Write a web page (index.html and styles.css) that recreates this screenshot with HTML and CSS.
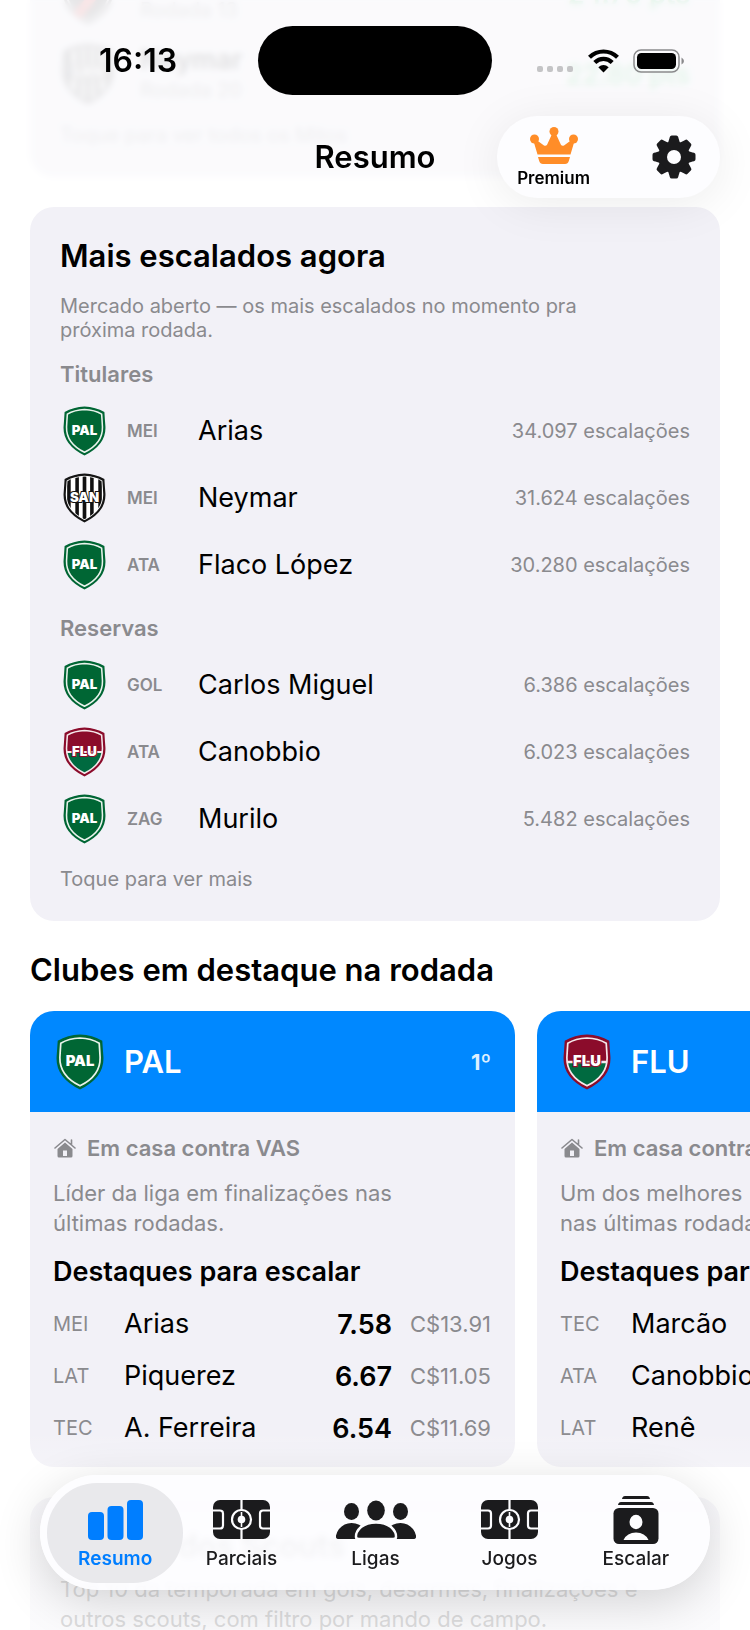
FILE: index.html
```html
<!DOCTYPE html>
<html lang="pt-BR">
<head>
<meta charset="utf-8">
<meta name="viewport" content="width=device-width, initial-scale=1">
<title>Resumo</title>
<link rel="stylesheet" href="styles.css">
</head>
<body>
<svg class="defs" aria-hidden="true">
  <defs>
    <path id="shield" d="M21 .5Q32 1 40.500 6Q41 14 41.500 20Q42.500 38 21 48.500Q-.5 38 .5 20Q1 14 1.500 6Q10 1 21 .5Z"/>
    <path id="shield-in" d="M21 3.500Q31 4 37.800 8Q38.300 15 38.600 20.500Q39 36.500 21 45.300Q3 36.500 3.400 20.500Q3.700 15 4.200 8Q11 4 21 3.500Z"/>
    <clipPath id="shield-clip"><use href="#shield-in"/></clipPath>
    <symbol id="pal" viewBox="0 0 42 49">
      <use href="#shield" fill="#006634"/>
      <use href="#shield-in" fill="#006634" stroke="#e9f3ec" stroke-width="1.500"/>
      <text class="crest" x="21" y="28" fill="#fff">PAL</text>
    </symbol>
    <symbol id="san" viewBox="0 0 42 49">
      <use href="#shield" fill="#151515"/>
      <use href="#shield-in" fill="#fff" stroke="#fff" stroke-width="1.500"/>
      <g clip-path="url(#shield-clip)" fill="#111"><path d="M4 4h3.500v42H4zM12 3h3.500v44H12zM19.200 3h3.600v44h-3.600zM26.500 3H30v44h-3.500zM34.500 4H38v42h-3.500z"/></g>
      <text class="crest crest-outline" x="21" y="28" fill="#fff">SAN</text>
    </symbol>
    <symbol id="flu" viewBox="0 0 42 49">
      <use href="#shield" fill="#8b0c2b"/>
      <use href="#shield-in" fill="#8b0c2b"/>
      <g clip-path="url(#shield-clip)"><path d="M0 25h42v24H0z" fill="#006a40"/><path d="M0 23.500h42v2H0z" fill="#f5e9ec"/></g>
      <use href="#shield-in" fill="none" stroke="#f5e9ec" stroke-width="1.500"/>
      <text class="crest crest-outline crest-flu" x="21" y="28" fill="#fff">FLU</text>
    </symbol>
    <symbol id="sao" viewBox="0 0 42 49">
      <use href="#shield" fill="#222"/>
      <use href="#shield-in" fill="#333" stroke="#fff" stroke-width="1.500"/>
      <path d="M36 14L12 42" stroke="#e33" stroke-width="7"/>
    </symbol>
    <symbol id="house" viewBox="0 0 22 20">
      <path d="M1 10L11 1.500L21 10M17.500 2v5" fill="none" stroke="currentColor" stroke-width="1.600" stroke-linecap="round" stroke-linejoin="round"/>
      <path fill-rule="evenodd" d="M11 4.500L18.500 11V18q0 1.500-1.500 1.500H5Q3.500 19.500 3.500 18V11ZM9 12.500V18h4V12.500Z" fill="currentColor"/>
    </symbol>
    <symbol id="pitch" viewBox="0 0 57 39">
      <rect width="57" height="39" rx="7" fill="currentColor"/>
      <g fill="none" stroke="#fdfdff" stroke-width="2.200">
        <path d="M28.500 0V11M28.500 28V39M0 10.500H7q3 0 3 3v12q0 3-3 3H0M57 10.500H50q-3 0-3 3v12q0 3 3 3h7"/>
        <circle cx="28.500" cy="19.500" r="9.500"/>
      </g>
      <path d="M28.500 12v15" stroke="#fdfdff" stroke-width="1.600"/>
      <circle cx="28.500" cy="19.500" r="3.800" fill="#fdfdff"/>
    </symbol>
  </defs>
</svg>

<div class="screen">
  <main class="content">
    <section class="card previous">
      <div class="past-row"><svg class="past-crest"><use href="#sao"/></svg><div class="past-info"><span class="past-name">Calleri</span><span>Rodada 13</span></div><span class="points">24.70 pts</span></div>
      <div class="past-row"><svg class="past-crest"><use href="#san"/></svg><div class="past-info"><span class="past-name">Neymar</span><span>Rodada 20</span></div><span class="points">22.80 pts</span></div>
      <p class="small">Toque para ver todos os Mitos</p>
    </section>

    <section class="card picks">
      <h2 class="title">Mais escalados agora</h2>
      <p class="small intro">Mercado aberto — os mais escalados no momento pra próxima rodada.</p>
      <h3 class="group">Titulares</h3>
      <ul class="players">
        <li><svg class="badge"><use href="#pal"/></svg><span class="pos">MEI</span><span class="name">Arias</span><span class="small">34.097 escalações</span></li>
        <li><svg class="badge"><use href="#san"/></svg><span class="pos">MEI</span><span class="name">Neymar</span><span class="small">31.624 escalações</span></li>
        <li><svg class="badge"><use href="#pal"/></svg><span class="pos">ATA</span><span class="name">Flaco López</span><span class="small">30.280 escalações</span></li>
      </ul>
      <h3 class="group">Reservas</h3>
      <ul class="players">
        <li><svg class="badge"><use href="#pal"/></svg><span class="pos">GOL</span><span class="name">Carlos Miguel</span><span class="small">6.386 escalações</span></li>
        <li><svg class="badge"><use href="#flu"/></svg><span class="pos">ATA</span><span class="name">Canobbio</span><span class="small">6.023 escalações</span></li>
        <li><svg class="badge"><use href="#pal"/></svg><span class="pos">ZAG</span><span class="name">Murilo</span><span class="small">5.482 escalações</span></li>
      </ul>
      <p class="small more">Toque para ver mais</p>
    </section>

    <h2 class="title section-title">Clubes em destaque na rodada</h2>
    <div class="carousel">
      <article class="club">
        <header class="club-head"><svg class="club-badge"><use href="#pal"/></svg><h3 class="club-name">PAL</h3><span class="rank">1º</span></header>
        <div class="club-body">
          <p class="venue"><svg class="house"><use href="#house"/></svg>Em casa contra VAS</p>
          <p class="body-text">Líder da liga em finalizações nas últimas rodadas.</p>
          <h4 class="subtitle">Destaques para escalar</h4>
          <ul class="scores">
            <li><span class="role">MEI</span><span class="name">Arias</span><b>7.58</b><span class="price">C$13.91</span></li>
            <li><span class="role">LAT</span><span class="name">Piquerez</span><b>6.67</b><span class="price">C$11.05</span></li>
            <li><span class="role">TEC</span><span class="name">A. Ferreira</span><b>6.54</b><span class="price">C$11.69</span></li>
          </ul>
        </div>
      </article>
      <article class="club">
        <header class="club-head"><svg class="club-badge"><use href="#flu"/></svg><h3 class="club-name">FLU</h3><span class="rank">2º</span></header>
        <div class="club-body">
          <p class="venue"><svg class="house"><use href="#house"/></svg>Em casa contra BAH</p>
          <p class="body-text">Um dos melhores<br>nas últimas rodadas.</p>
          <h4 class="subtitle">Destaques para escalar</h4>
          <ul class="scores">
            <li><span class="role">TEC</span><span class="name">Marcão</span></li>
            <li><span class="role">ATA</span><span class="name">Canobbio</span></li>
            <li><span class="role">LAT</span><span class="name">Renê</span></li>
          </ul>
        </div>
      </article>
    </div>

    <section class="card leaders">
      <h2 class="title">Líderes dos Scouts</h2>
      <p class="body-text">Top 10 da temporada em gols, desarmes, finalizações e outros scouts, com filtro por mando de campo.</p>
    </section>
  </main>

  <header class="topbar">
    <div class="status">
      <span class="clock">16:13</span>
      <span class="island"></span>
      <span class="signals">
        <svg width="37" height="24" viewBox="0 0 37 24"><g fill="#c4c4c6"><rect x="0" y="17" width="6" height="6" rx="2"/><rect x="10" y="17" width="6" height="6" rx="2"/><rect x="20" y="17" width="6" height="6" rx="2"/><rect x="30" y="17" width="6" height="6" rx="2"/></g></svg>
        <svg width="31" height="24" viewBox="0 0 31 24"><g fill="none" stroke="#000" stroke-width="4.200"><path d="M1.500 8.300Q7.500 2.500 15.500 2.500T29.500 8.300"/><path d="M6.800 13.500Q10.500 9.800 15.500 9.800T24.200 13.500"/></g><path d="M10.300 18.200Q15.500 13.600 20.700 18.200L15.500 23.500Z"/></svg>
        <svg width="52" height="24" viewBox="0 0 52 24"><rect x="1" y="1" width="45" height="22" rx="7" fill="none" stroke="#8a8a8c" stroke-width="1.500"/><rect x="4" y="4" width="39" height="16" rx="4.500"/><path d="M48.500 8.500Q51 10 51 12T48.500 15.500Z" fill="#8a8a8c"/></svg>
      </span>
    </div>
    <div class="navbar">
      <h1 class="page-title">Resumo</h1>
      <div class="actions">
        <button class="premium" type="button">
          <svg width="48" height="37" viewBox="0 0 48 37" fill="#ff8d28"><circle cx="24" cy="4.500" r="4.500"/><circle cx="4.500" cy="12" r="4.500"/><circle cx="43.500" cy="12" r="4.500"/><path d="M3.500 14L6.500 13L14 18.500Q16 19.500 17.200 17.500L22 7h4L30.800 17.500Q32 19.500 34 18.500L41.500 13L44.500 14L40.500 27.500h-33ZM8 30H40L38.800 34Q38 37 35 37H13Q10 37 9.200 34Z"/></svg>
          <span>Premium</span>
        </button>
        <button class="gear" type="button" aria-label="Configurações">
          <svg width="44" height="44" viewBox="-22 -22 44 44" fill="#1b1b1d"><circle r="15.800"/><path id="tooth" d="M-6 -14L-4.600 -18.500L-4.200 -20Q-3.800 -21.500 -2.300 -21.500H2.300Q3.800 -21.500 4.200 -20L4.600 -18.500L6 -14Z"/><use href="#tooth" transform="rotate(45)"/><use href="#tooth" transform="rotate(90)"/><use href="#tooth" transform="rotate(135)"/><use href="#tooth" transform="rotate(180)"/><use href="#tooth" transform="rotate(225)"/><use href="#tooth" transform="rotate(270)"/><use href="#tooth" transform="rotate(315)"/><circle r="7" fill="#fdfdff"/></svg>
        </button>
      </div>
    </div>
  </header>

  <div class="dock">
    <nav class="tabs">
      <a class="tab active" href="#resumo"><svg width="55" height="48" viewBox="0 0 55 48" fill="currentColor"><rect x="0" y="16" width="16" height="28" rx="4"/><rect x="19.500" y="10" width="16" height="34" rx="4"/><rect x="39" y="4" width="16" height="40" rx="4"/></svg><span>Resumo</span></a>
      <a class="tab" href="#parciais"><svg width="57" height="48"><use href="#pitch" y="4" width="57" height="39"/></svg><span>Parciais</span></a>
      <a class="tab wide" href="#ligas"><svg width="80" height="48" viewBox="0 -4 80 48" fill="currentColor"><ellipse cx="15.500" cy="11.500" rx="7.500" ry="8.500"/><ellipse cx="64.500" cy="11.500" rx="7.500" ry="8.500"/><path d="M0 37Q-.5 34 3 29Q8 23 15.500 23Q24 23 29 30V39H3Q0 39 0 37ZM80 37Q80.500 34 77 29Q72 23 64.500 23Q56 23 51 30V39H77Q80 39 80 37Z"/><path d="M20 37Q19.500 32 25 27Q31 22.500 40 22.500T55 27Q60.500 32 60 37Q60 39 57 39H23Q20 39 20 37Z" stroke="#fdfdff" stroke-width="2.500"/><path d="M18 39h44v4H18z" fill="#fdfdff"/><ellipse cx="40" cy="10.500" rx="8.800" ry="10"/></svg><span>Ligas</span></a>
      <a class="tab" href="#jogos"><svg width="57" height="48"><use href="#pitch" y="4" width="57" height="39"/></svg><span>Jogos</span></a>
      <a class="tab" href="#escalar"><svg width="46" height="48" viewBox="0 0 46 48" fill="currentColor"><path d="M9 3Q9.500 0 12 0H34Q36.500 0 37 3ZM5 9Q5.500 6 8 6H38Q40.500 6 41 9Z"/><rect x=".5" y="12" width="45" height="36" rx="5.500"/><ellipse cx="23" cy="26" rx="6.500" ry="7.200" fill="#fdfdff"/><path d="M10.500 44Q14 36.500 23 36.500T35.500 44Z" fill="#fdfdff"/></svg><span>Escalar</span></a>
    </nav>
  </div>
</div>
</body>
</html>
```

FILE: styles.css
```css
* { box-sizing: border-box; margin: 0; padding: 0; }

body {
  background: #fff;
  color: #000;
  font-family: Inter, "Liberation Sans", sans-serif;
}

ul { list-style: none; }
svg { display: block; flex: none; }
button { border: 0; background: none; font: inherit; color: inherit; }
a { color: inherit; text-decoration: none; }

.defs { position: absolute; width: 0; height: 0; }

.screen { position: relative; height: 100vh; overflow: hidden; }

.content { height: 100%; overflow: hidden; }

.card {
  margin: 0 30px 30px;
  padding: 30px;
  border-radius: 24px;
  background: #f2f1f7;
}

.title { font-size: 31px; line-height: 38px; font-weight: 600; }
.small { font-size: 20px; line-height: 24px; color: #8a8a8e; }
.name { flex: 1; font-size: 27px; line-height: 32px; white-space: nowrap; }

/* Crests */
.crest { font: 900 13px Inter, sans-serif; text-anchor: middle; }
.crest-outline { stroke: #111; stroke-width: 2; paint-order: stroke; }
.crest-flu { stroke: #8b0c2b; }

/* Card scrolled beneath the top bar */
.previous { margin-top: -37px; padding-top: 0; }
.previous > * { opacity: .3; }
.past-row { display: flex; align-items: center; gap: 26px; margin-bottom: 18px; }
.past-crest { width: 52px; height: 62px; margin-left: 2px; }
.past-info { flex: 1; display: flex; flex-direction: column; font-size: 20px; line-height: 28px; color: #777; }
.past-name { font-size: 27px; line-height: 32px; font-weight: 600; color: #000; }
.points { font-size: 27px; font-weight: 600; color: #2fc45a; }

/* Most picked players */
.intro { margin-top: 19px; padding-right: 60px; }
.group { margin: 18px 0 9px; font-size: 22px; line-height: 28px; font-weight: 600; color: #8a8a8e; }
.players li { display: flex; align-items: center; height: 67px; }
.players + .group { margin-top: 16px; }
.badge { width: 43px; height: 50px; margin: 0 21px 0 3px; }
.pos { width: 71px; font-size: 17px; line-height: 24px; font-weight: 600; color: #8a8a8e; }
.more { margin-top: 15px; }

/* Clubs carousel */
.section-title { margin: 0 30px 22px; }
.carousel { display: flex; gap: 22px; margin-bottom: 30px; padding-left: 30px; overflow: hidden; }
.club { flex: 0 0 485px; border-radius: 24px; background: #f2f1f7; overflow: hidden; }
.club-head { display: flex; align-items: center; height: 101px; padding: 0 24px 0 26px; background: #0088ff; color: #fff; }
.club-badge { width: 48px; height: 56px; margin-right: 20px; }
.club-name { flex: 1; font-size: 31px; line-height: 38px; font-weight: 600; }
.rank { font-size: 22px; font-weight: 700; color: #deefff; }
.club-body { padding: 22px 24px 13px 23px; }
.venue { display: flex; align-items: center; gap: 11px; font-size: 22px; line-height: 28px; font-weight: 600; color: #8a8a8e; white-space: nowrap; }
.house { width: 22px; height: 20px; margin-left: 1px; }
.body-text { font-size: 22px; line-height: 30px; color: #8a8a8e; }
.club .body-text { margin: 16px 0 18px; padding-right: 60px; }
.subtitle { margin-bottom: 10px; font-size: 27px; line-height: 32px; font-weight: 600; white-space: nowrap; }
.scores li { display: flex; align-items: center; height: 52px; }
.role { width: 71px; font-size: 20px; color: #8a8a8e; }
.scores b { margin-right: 16px; font-size: 27px; font-weight: 600; }
.price { width: 83px; font-size: 22px; color: #8a8a8e; text-align: right; white-space: nowrap; }

.leaders { margin-bottom: 0; }
.leaders .body-text { margin-top: 9px; }

/* Top bar */
.topbar { position: absolute; inset: 0 0 auto; display: flow-root; }
.topbar::before {
  content: "";
  position: absolute;
  inset: 0;
  background: rgba(255, 255, 255, .65);
  backdrop-filter: blur(3px);
}
.status { position: relative; display: grid; grid-template-columns: 1fr 234px 1fr; align-items: center; height: 69px; margin-top: 26px; }
.clock { padding-left: 99px; font-size: 32px; font-weight: 600; }
.island { height: 69px; border-radius: 35px; background: #000; }
.signals { display: flex; justify-content: flex-end; gap: 14px; padding-right: 65px; }
.navbar { position: relative; display: grid; grid-template-columns: 1fr auto 1fr; align-items: center; margin: 21px 30px 8px; }
.page-title { grid-column: 2; font-size: 31px; line-height: 38px; font-weight: 600; }
.actions {
  justify-self: end;
  display: flex;
  align-items: center;
  gap: 62px;
  height: 82px;
  padding: 0 24px 0 20px;
  border-radius: 41px;
  background: #fdfdff;
  box-shadow: 0 6px 48px rgba(0, 0, 0, .08);
}
.premium { display: flex; flex-direction: column; align-items: center; gap: 4px; font-size: 17px; line-height: 20px; font-weight: 600; }

/* Bottom tab bar */
.dock {
  position: absolute;
  inset: auto 0 0;
  padding: 45px 40px 40px;
  background: linear-gradient(rgba(255, 255, 255, 0), rgba(255, 255, 255, .7) 60%);
}
.tabs {
  display: flex;
  height: 115px;
  padding: 8px 11px 7px 12px;
  border-radius: 58px;
  background: rgba(253, 253, 255, .88);
  backdrop-filter: blur(3px);
  box-shadow: 0 12px 48px rgba(0, 0, 0, .16);
}
.tab {
  position: relative;
  flex: 1;
  display: flex;
  flex-direction: column;
  align-items: center;
  gap: 4px;
  padding-top: 13px;
  color: #1b1b1d;
  font-size: 19px;
  line-height: 22px;
  font-weight: 500;
}
.tab > * { position: relative; }
.wide { flex-grow: 1.12; }
.active { color: #007eff; font-weight: 600; }
.active::before {
  content: "";
  position: absolute;
  inset: 0 -5px;
  border-radius: 50px;
  background: #e9e9ec;
}
```
